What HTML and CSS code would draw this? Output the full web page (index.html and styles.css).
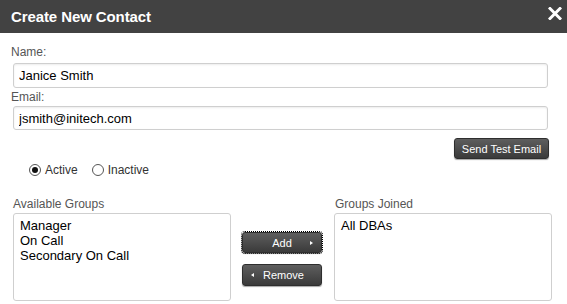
FILE: index.html
```html
<!DOCTYPE html>
<html lang="en">
<head>
  <meta charset="UTF-8">
  <title>Create New Contact</title>
  <link rel="stylesheet" href="styles.css">
</head>
<body>
  <div class="dialog">
    <!-- Title bar -->
    <div class="titlebar">
      <span class="title">Create New Contact</span>
      <svg class="close" width="14" height="13" viewBox="0 0 14 13">
        <path d="M2 1.5 L12 11.5 M12 1.5 L2 11.5" stroke="#fff" stroke-width="3" stroke-linecap="square"/>
      </svg>
    </div>
    <div class="content">
      <label class="field-label" for="name">Name:</label>
      <input class="text-input" type="text" id="name" value="Janice Smith">
      <label class="field-label email-label" for="email">Email:</label>
      <input class="text-input email-input" type="text" id="email" value="jsmith@initech.com">
      <div class="send-row">
        <button class="btn send-btn">Send Test Email</button>
      </div>
      <div class="status-row">
        <span class="radio checked"></span><span class="radio-text">Active</span>
        <span class="radio"></span><span class="radio-text">Inactive</span>
      </div>
      <!-- Groups -->
      <div class="groups">
        <div class="group-col">
          <div class="field-label">Available Groups</div>
          <div class="listbox">
            <div>Manager</div>
            <div>On Call</div>
            <div>Secondary On Call</div>
          </div>
        </div>
        <div class="group-actions">
          <button class="btn move-btn add-btn">Add<span class="arrow-right"></span></button>
          <button class="btn move-btn remove-btn"><span class="arrow-left"></span>Remove</button>
        </div>
        <div class="group-col">
          <div class="field-label joined-label">Groups Joined</div>
          <div class="listbox">
            <div>All DBAs</div>
          </div>
        </div>
      </div>
    </div>
  </div>
</body>
</html>
```

FILE: styles.css
```css
body {
  margin: 0;
  font-family: "Liberation Sans", Arial, sans-serif;
  background-color: #fff;
  color: #000;
}
.dialog {
  width: 567px;
  height: 304px;
  overflow: hidden;
}
.titlebar {
  height: 33px;
  background-color: #424242;
  display: flex;
  align-items: center;
  justify-content: space-between;
  padding: 0 5px 0 11px;
  box-sizing: border-box;
}
.title {
  color: #fff;
  font-weight: bold;
  font-size: 15px;
  letter-spacing: -0.1px;
}
.close {
  display: block;
  margin-bottom: 6px;
}
.content {
  padding: 12px 19px 0 11px;
}
.field-label {
  display: block;
  font-size: 12px;
  line-height: 14px;
  color: #555;
  margin-bottom: 4px;
}
.email-label {
  margin-top: 2px;
  margin-bottom: 2px;
}
.text-input {
  display: block;
  box-sizing: border-box;
  width: 535px;
  height: 25px;
  margin-left: 2px;
  padding: 0 5px;
  border: 1px solid #cfcfcf;
  border-radius: 3px;
  box-shadow: inset 0 1px 2px rgba(0, 0, 0, 0.08);
  font-family: "Liberation Sans", Arial, sans-serif;
  font-size: 13px;
  color: #000;
}
.email-input {
  height: 24px;
}
.send-row {
  display: flex;
  justify-content: flex-end;
  margin-top: 8px;
  margin-right: -1px;
}
.btn {
  font-family: "Liberation Sans", Arial, sans-serif;
  font-size: 11px;
  color: #fff;
  background: linear-gradient(#5e5e5e, #3a3a3a);
  border: 1px solid #2e2e2e;
  border-radius: 3px;
  box-shadow: 0 1px 1px rgba(0, 0, 0, 0.35);
  padding: 0;
  cursor: pointer;
}
.send-btn {
  width: 95px;
  height: 21px;
}
/* Active / Inactive */
.status-row {
  display: flex;
  align-items: center;
  height: 14px;
  margin-top: 4px;
  padding-left: 18px;
  font-size: 12px;
  color: #333;
}
.radio {
  width: 12px;
  height: 12px;
  box-sizing: border-box;
  border: 1px solid #555;
  border-radius: 50%;
  background: #fff;
  display: flex;
  align-items: center;
  justify-content: center;
}
.radio.checked::after {
  content: "";
  width: 6px;
  height: 6px;
  border-radius: 50%;
  background: #111;
}
.radio-text {
  margin-left: 4px;
  margin-right: 14px;
}
.groups {
  display: flex;
  gap: 11px;
  margin-top: 20px;
  margin-left: 2px;
}
.group-col {
  width: 218px;
  flex-shrink: 0;
}
.group-col .field-label {
  margin-bottom: 2px;
}
.joined-label {
  padding-left: 1px;
}
.listbox {
  box-sizing: border-box;
  height: 88px;
  border: 1px solid #cfcfcf;
  border-radius: 3px;
  padding: 4px 6px;
  font-size: 13px;
  line-height: 15px;
  color: #000;
}
.group-actions {
  width: 80px;
  flex-shrink: 0;
  display: flex;
  flex-direction: column;
  gap: 11px;
  padding-top: 35px;
  margin-right: 1px;
}
.move-btn {
  position: relative;
  width: 80px;
  height: 21px;
}
.add-btn {
  outline: 1px dotted #000;
  outline-offset: 0;
}
.remove-btn {
  height: 22px;
  text-align: left;
  padding-left: 20px;
}
.arrow-right,
.arrow-left {
  position: absolute;
  top: 8px;
  width: 0;
  height: 0;
  border-top: 2.5px solid transparent;
  border-bottom: 2.5px solid transparent;
}
.arrow-right {
  right: 8px;
  border-left: 3px solid #fff;
}
.arrow-left {
  left: 8px;
  border-right: 3px solid #fff;
}
```
